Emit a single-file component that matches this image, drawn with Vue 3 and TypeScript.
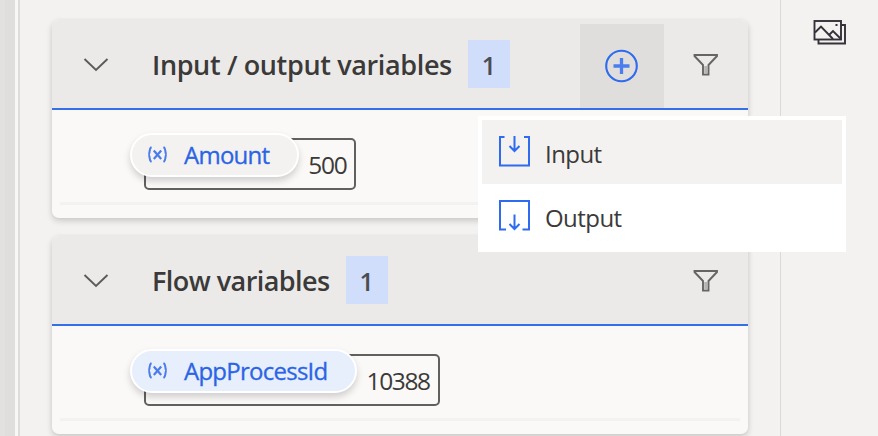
<script setup lang="ts">
interface Variable {
  name: string
  value: string
}
interface Section {
  id: string
  title: string
  canAdd: boolean
  variables: Variable[]
}

const sections: Section[] = [
  { id: 'io', title: 'Input / output variables', canAdd: true, variables: [{ name: 'Amount', value: '500' }] },
  { id: 'flow', title: 'Flow variables', canAdd: false, variables: [{ name: 'AppProcessId', value: '10388' }] },
]
</script>

<template>
  <div class="app">
    <div class="gutter"></div>
    <main class="pane">
      <section v-for="s in sections" :key="s.id" class="card" :class="s.id">
        <header class="head">
          <svg class="chevron" width="26" height="16" viewBox="0 0 26 16">
            <path d="M1.5 3 L13 14 L24.5 3" fill="none" stroke="#5c5b5a" stroke-width="1.9" />
          </svg>
          <h2 class="title">{{ s.title }}</h2>
          <span class="badge">{{ s.variables.length }}</span>
          <span class="grow"></span>
          <button v-if="s.canAdd" class="add" aria-label="Add">
            <svg width="34" height="34" viewBox="0 0 34 34" fill="none" stroke="#2f6bee">
              <circle cx="16.5" cy="17" r="15.3" stroke-width="2.1" />
              <path d="M16.5 9 V25 M8.5 17 H24.5" stroke-width="3.3" stroke="#4a7eee" />
            </svg>
          </button>
          <button class="filter" aria-label="Filter">
            <svg width="26" height="24" viewBox="0 0 26 24" stroke="#666564">
              <path d="M1.5 3 H24 V4 L15.500 13 V22.500 H10 V13 L1.500 4 Z" fill="none" stroke-width="1.900" />
              <path d="M12.750 14 V22" stroke="#b5b4b3" stroke-width="3" />
            </svg>
          </button>
        </header>
        <div class="body">
          <div v-for="v in s.variables" :key="v.name" class="variable">
            <span class="pill">
              <svg class="fx" width="22" height="18" viewBox="0 0 22 18" fill="none" stroke="#4a7cec" stroke-width="2">
                <path d="M4.500 1 C2.600 2 2.800 4 2.500 6 C2.300 7.500 1.800 8.500 1.300 8.500 C1.800 8.500 2.300 9.500 2.500 11 C2.800 13 2.600 15 4.500 16" />
                <path d="M16.500 1 C18.400 2 18.200 4 18.500 6 C18.700 7.500 19.200 8.500 19.700 8.500 C19.200 8.500 18.700 9.500 18.500 11 C18.200 13 18.400 15 16.500 16" />
                <path d="M6.800 4.500 L14.200 13 M14.200 4.500 L6.800 13" stroke-width="2.200" />
              </svg>
              <span class="name">{{ v.name }}</span>
            </span>
            <span class="value">{{ v.value }}</span>
          </div>
        </div>
      </section>
    </main>
    <aside class="rail">
      <svg width="34" height="27" viewBox="0 0 34 27" fill="none" stroke="#343238" stroke-width="1.900">
        <path d="M5.500 21 V24.500 H32 V6 H28" />
        <rect x="1.500" y="2" width="26.500" height="18.500" />
        <path d="M2 13.500 L8 7.500 L20 20 M16 16 L20 12 L28 20" />
        <rect x="23" y="5.500" width="1" height="1" stroke-width="1" />
      </svg>
    </aside>

    <ul class="menu">
      <li class="item active">
        <svg width="32" height="32" viewBox="0 0 32 32" fill="none" stroke="#2f6bee" stroke-width="2">
          <path d="M6.500 2 H2 V30.500 H31 V2 H26 M16.500 1 V16 M11.500 11 L16.500 16 L21.500 11" />
        </svg>
        <span>Input</span>
      </li>
      <li class="item">
        <svg width="32" height="32" viewBox="0 0 32 32" fill="none" stroke="#2f6bee" stroke-width="2">
          <path d="M8 30.500 H2 V2 H31 V30.500 H24.500 M16.500 15.500 V30 M11.500 25 L16.500 30 L21.500 25" />
        </svg>
        <span>Output</span>
      </li>
    </ul>
  </div>
</template>

<style>
body {
  background: #f3f2f1;
  overflow: hidden;
}
</style>

<style scoped>
.app {
  position: relative;
  display: flex;
  box-sizing: border-box;
  width: 878px;
  height: 436px;
  overflow: hidden;
  background: #f3f2f1;
  color: #3b3a39;
  font-family: "Open Sans", "Noto Sans", sans-serif;
}
.gutter {
  box-sizing: border-box;
  flex: none;
  width: 20px;
  background: linear-gradient(90deg, #e2e1e0 0 5px, #dfdedd 5px 15px, #f8f7f6 15px 18px, #dddcdb 18px 20px);
}
.pane {
  box-sizing: border-box;
  flex: none;
  display: flex;
  flex-direction: column;
  gap: 18px;
  width: 761px;
  padding: 20px 32px 0;
  border-right: 1px solid #dad9d8;
}
.card {
  flex: none;
  width: 696px;
  height: 198px;
  border-radius: 7px;
  background: #faf9f8;
  box-shadow: 0 3px 6px rgba(0, 0, 0, 0.16), 0 0 5px rgba(0, 0, 0, 0.04);
}
.head {
  box-sizing: border-box;
  display: flex;
  align-items: center;
  height: 90px;
  padding-left: 31px;
  padding-right: 29px;
  border-bottom: 2px solid #346eea;
  border-radius: 7px 7px 0 0;
  background: #ebeae9;
}
.chevron {
  flex: none;
  margin-right: 43px;
}
.title {
  margin: 0;
  padding-top: 2px;
  font-size: 27px;
  font-weight: 600;
  line-height: 40px;
  white-space: nowrap;
  letter-spacing: -0.55px;
}
.io .title {
  letter-spacing: -0.36px;
}
.badge {
  width: 42px;
  height: 48px;
  margin-left: 16px;
  background: #d0defb;
  color: #4b4c50;
  font-size: 25px;
  font-weight: 600;
  line-height: 50px;
  text-align: center;
}
.grow {
  flex: 1;
}
button {
  display: flex;
  align-items: center;
  justify-content: center;
  padding: 0;
  border: 0;
  background: none;
}
.add {
  align-self: flex-end;
  width: 84px;
  height: 84px;
  margin-right: 29px;
  background: #dfdedd;
}
.body {
  box-sizing: border-box;
  height: 95px;
  margin: 0 8px;
  padding: 28px 0 0 84px;
  border-bottom: 3px solid #f3f2f1;
}
.variable {
  box-sizing: border-box;
  display: inline-flex;
  align-items: flex-start;
  height: 52px;
  border: 2px solid #60605f;
  border-radius: 5px;
}
.pill {
  box-sizing: border-box;
  display: flex;
  align-items: center;
  height: 44px;
  margin: -7px 0 0 -16px;
  padding: 0 28px 0 15px;
  border: 2px solid #fff;
  border-radius: 22px;
  background: #f3f2f1;
  box-shadow: 0 4px 7px rgba(0, 0, 0, 0.17);
  color: #2b64e5;
}
.flow .pill {
  background: #e7effd;
}
.fx {
  margin-right: 15px;
}
.name {
  font-size: 24px;
  line-height: 40px;
  letter-spacing: -0.75px;
  -webkit-text-stroke: 0.3px currentColor;
}
.value {
  padding: 0 8px 0 9px;
  font-size: 24.5px;
  line-height: 50px;
  letter-spacing: -1.35px;
}
.rail {
  flex: 1;
  padding: 19px 0 0 32px;
}
.menu {
  position: absolute;
  left: 478px;
  top: 116px;
  box-sizing: border-box;
  width: 368px;
  height: 136px;
  margin: 0;
  padding: 4px;
  background: #fff;
  list-style: none;
}
.item {
  box-sizing: border-box;
  display: flex;
  align-items: center;
  gap: 15px;
  height: 64px;
  padding: 0 16px 2px;
  font-size: 24px;
  letter-spacing: -0.55px;
}
.item span {
  padding-top: 4px;
}
.active {
  background: #f3f2f1;
}
</style>
